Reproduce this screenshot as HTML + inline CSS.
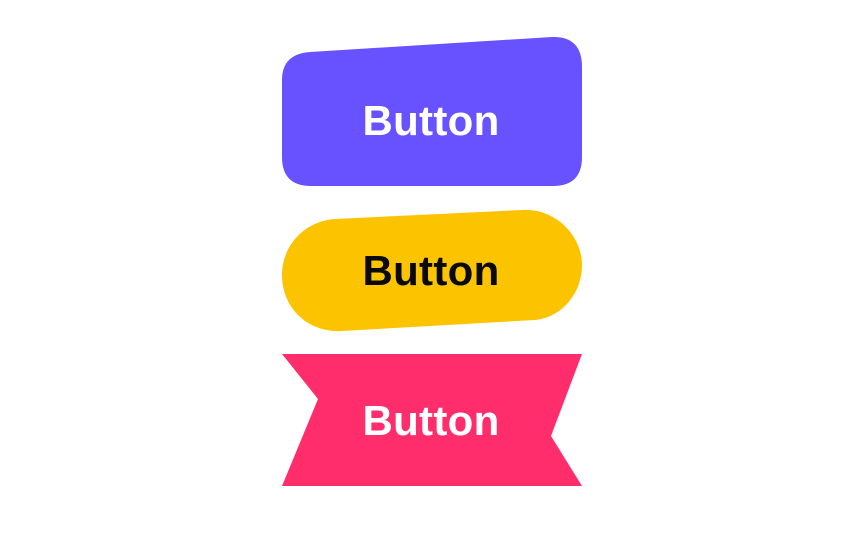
<!DOCTYPE html>
<html><head><style>body{margin:0;background:#fff}</style></head><body>
<svg width="864" height="540" viewBox="0 0 864 540" xmlns="http://www.w3.org/2000/svg">
<path d="M310,52 L552,37 Q582,36 582,67 V157 Q582,186 553,186 H311 Q282,186 282,157 V80 Q282,54 310,52 Z" fill="#6851ff"/>
<path d="M335,219 L522,210 C555,208 582,235 582,265 C582,295 560,318 535,320 L342,331 C308,333 282,308 282,275 C282,245 305,221 335,219 Z" fill="#fcc400"/>
<path d="M282,354 H582 L551,436 L582,486 H282 L318,399 Z" fill="#ff2d6c"/>
<g font-family="Liberation Sans, sans-serif" font-weight="bold" font-size="42" text-anchor="middle" letter-spacing="0.3">
<text x="431" y="135" fill="#fff">Button</text>
<text x="431" y="285" fill="#0a0a0a">Button</text>
<text x="431" y="435" fill="#fff">Button</text>
</g>
</svg>
</body></html>
